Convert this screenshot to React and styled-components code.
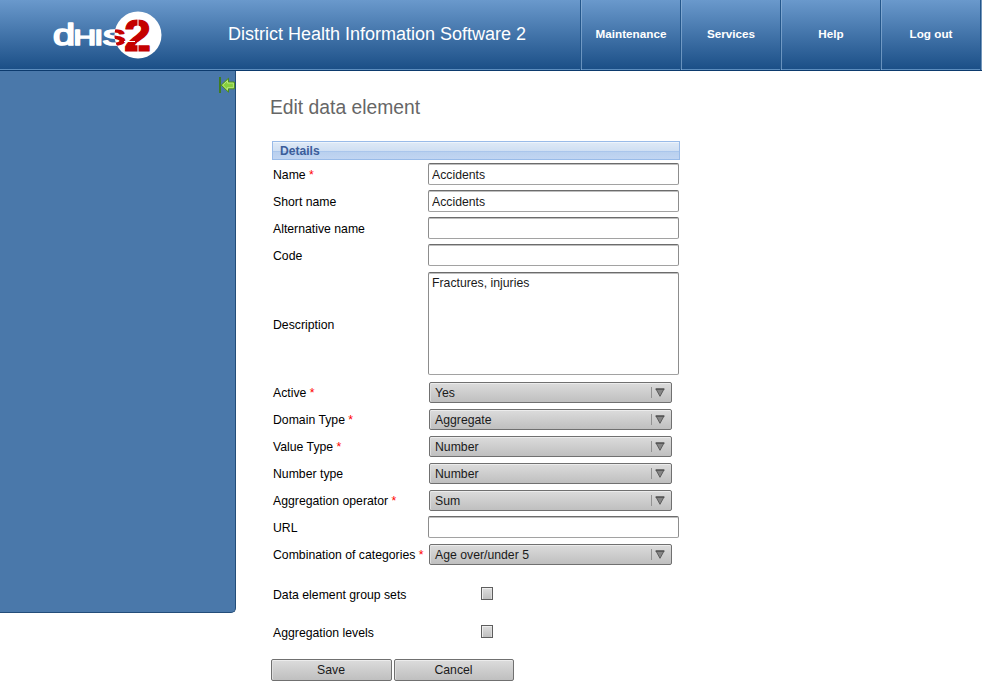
import React from "react";
import styled, { createGlobalStyle } from "styled-components";

const GlobalStyle = createGlobalStyle`
  * { box-sizing: border-box; }
  body {
    margin: 0;
    background: #fff;
    color: #000;
    font-family: "Liberation Sans", Arial, sans-serif;
    font-size: 12.25px;
    overflow: hidden;
  }
`;

const Header = styled.header`
  display: flex;
  height: 71px;
  background: linear-gradient(#6a99cc, #1b4f87 69px);
  border-bottom: 1px solid #0c3a6d;
  box-shadow: inset 0 -1px 0 #5c8dbe;
`;

const Logo = styled.svg`
  flex: none;
  width: 228px;
  height: 70px;
`;

const Brand = styled.div`
  flex: none;
  width: 352px;
  color: #fff;
  font-size: 18px;
  line-height: 69px;
  white-space: nowrap;
`;

const Nav = styled.nav`
  display: flex;
  width: 402px;
  border-right: 1px solid #7396bb;
`;

const NavItem = styled.a`
  flex: none;
  width: 100px;
  padding-left: 1px;
  border-left: 1px solid #23568b;
  box-shadow: inset 1px 0 0 rgba(150, 185, 220, 0.6);
  color: #fff;
  font-size: 11.7px;
  font-weight: bold;
  line-height: 68px;
  text-align: center;

  &:last-child { width: 101px; border-right: 1px solid #23568b; }
`;

const Body = styled.div`
  display: flex;
  align-items: flex-start;
`;

const Sidebar = styled.aside`
  flex: none;
  display: flex;
  justify-content: flex-end;
  width: 236px;
  height: 542px;
  padding-top: 6px;
  background: #4a78aa;
  border: solid #234d79;
  border-width: 0 1px 1px 0;
  border-bottom-right-radius: 5px;
`;

const Main = styled.main`
  padding: 25px 0 0 35px;
`;

const Title = styled.h1`
  height: 45px;
  margin: 0 0 0 -1px;
  color: #666;
  font-size: 19.3px;
  font-weight: normal;
  line-height: 24px;
`;

const SectionHeading = styled.h2`
  width: 408px;
  height: 19px;
  margin: 0 0 1px 1px;
  padding-left: 7px;
  border: 1px solid #99bbe8;
  background: linear-gradient(#dfeaf6, #cfdff3 9px, #aac6ec 9px, #aac6ec 10px, #b9d0ee 10px, #c1d5f2);
  box-shadow: inset 0 1px 0 #edf4fc;
  color: #3c5d9a;
  font-size: 12.1px;
  font-weight: bold;
  line-height: 18px;
`;

const Row = styled.div`
  display: grid;
  grid-template-columns: 155px 251px;
  align-items: center;
  height: ${(p) => p.$height || 27}px;
  margin-left: 2px;
`;

const Label = styled.label`
  padding-top: ${(p) => (p.$low ? 2 : 0)}px;
  line-height: 16px;
  white-space: nowrap;
`;

const Required = styled.span`
  color: #f00;
`;

const TextInput = styled.input`
  width: 251px;
  height: 22px;
  margin-bottom: 1px;
  padding: 1px 3px 0;
  border: 1px solid #8d8d8d;
  border-top-color: #6c6c6c;
  border-bottom-color: #a2a2a2;
  border-radius: 2px;
  box-shadow: inset 0 1px 0 #bebebe;
  color: #1a1a1a;
  font: 12.25px "Liberation Sans", Arial, sans-serif;
  outline: none;
`;

const TextArea = styled.textarea`
  display: block;
  width: 251px;
  height: 103px;
  margin-bottom: 1px;
  padding: 3px 3px 0;
  border: 1px solid #8d8d8d;
  border-top-color: #6c6c6c;
  border-bottom-color: #a2a2a2;
  border-radius: 2px;
  box-shadow: inset 0 1px 0 #bebebe;
  color: #1a1a1a;
  font: 12.25px "Liberation Sans", Arial, sans-serif;
  resize: none;
  outline: none;
`;

const SelectButton = styled.button`
  display: flex;
  align-items: center;
  justify-content: space-between;
  width: 243px;
  height: 21px;
  margin-left: 1px;
  padding: 0 5px;
  border: 1px solid #707070;
  border-radius: 2px;
  background: linear-gradient(#dcdcdc, #bfbfbf);
  box-shadow: inset 0 1px 0 #ececec, inset 1px 0 0 #dedede;
  color: #1a1a1a;
  font: 12.25px "Liberation Sans", Arial, sans-serif;
`;

const Checkbox = styled.input`
  appearance: none;
  width: 12px;
  height: 13px;
  margin: 0 0 1px 53px;
  border: 1px solid #5e5e5e;
  background: linear-gradient(#dedede, #bfbfbf);
  box-shadow: inset 1px 1px 0 #eee, inset -1px 0 0 #ddd;
`;

const Actions = styled.div`
  display: flex;
  gap: 2px;
  padding-top: 8px;
`;

const Button = styled.button`
  width: ${(p) => p.$width}px;
  height: 22px;
  padding: 0 1px 0 0;
  border: 1px solid #707070;
  border-radius: 2px;
  background: linear-gradient(#dcdcdc, #bfbfbf);
  box-shadow: inset 0 1px 0 #ececec, inset 1px 0 0 #dedede;
  color: #1a1a1a;
  font: 12.25px "Liberation Sans", Arial, sans-serif;
`;

const Spacer = styled.div`
  height: 7px;
`;

function Dhis2Logo() {
  const word = {
    y: 44.5,
    fontFamily: "Liberation Sans, Arial, sans-serif",
    fontSize: 22,
    fill: "#fff",
    stroke: "#fff",
    strokeWidth: 1.7,
    strokeLinejoin: "round",
    lengthAdjust: "spacingAndGlyphs",
  };
  const red = { fill: "#c40000", stroke: "#c40000" };
  return (
    <Logo viewBox="0 0 228 70" role="img" aria-label="DHIS 2">
      <defs>
        <clipPath id="inside"><circle cx="138" cy="35" r="23.5" /></clipPath>
      </defs>
      <circle cx="138" cy="35" r="23.5" fill="#fff" />
      <text {...word} x="53" fontSize="30" textLength="22">d</text>
      <text {...word} x="73.5" textLength="22.5">H</text>
      <text {...word} x="94.5" textLength="8.5">I</text>
      <text {...word} x="102.5" textLength="23">S</text>
      <g clipPath="url(#inside)">
        <text {...word} {...red} x="102.5" textLength="23">S</text>
      </g>
      <text {...word} {...red} x="124" y="50.5" fontSize="44.5" fontWeight="bold" strokeWidth="1.2" textLength="27">2</text>
      <path d="M138 18V30M138 42V52M124 41.5H135" stroke="#fff" strokeWidth="1" />
    </Logo>
  );
}

function CollapseIcon() {
  return (
    <svg width="16" height="17" viewBox="0 0 16 17">
      <path d="M0 0H2V16H0Z" fill="#3f7d22" />
      <path d="M2.2 8.2L9.5 1.2V5H15.4V11.8H9.5V15.2Z" fill="#86cf3d" stroke="#4c8a1e" />
      <path d="M3.7 8.1L8.5 3.6V6.1H14.4V10.7H8.5V12.9Z" fill="none" stroke="#c4ec8c" strokeWidth=".8" />
    </svg>
  );
}

function Arrow() {
  return (
    <svg width="15" height="13" viewBox="0 0 15 13">
      <path d="M.5 1V12" stroke="#929292" />
      <path d="M5 3H13L9 10.3Z" fill="#858585" stroke="#555" strokeWidth=".9" />
      <path d="M4.5 3H13.5" stroke="#444" />
    </svg>
  );
}

const fields = [
  { label: "Name", required: true, value: "Accidents" },
  { label: "Short name", value: "Accidents" },
  { label: "Alternative name", value: "" },
  { label: "Code", value: "" },
  { label: "Description", type: "area", value: "Fractures, injuries" },
  { label: "Active", required: true, type: "select", value: "Yes" },
  { label: "Domain Type", required: true, type: "select", value: "Aggregate" },
  { label: "Value Type", required: true, type: "select", value: "Number" },
  { label: "Number type", type: "select", value: "Number" },
  { label: "Aggregation operator", required: true, type: "select", value: "Sum" },
  { label: "URL", value: "" },
  { label: "Combination of categories", required: true, type: "select", value: "Age over/under 5" },
];

function Control({ type, value }) {
  if (type === "area") return <TextArea defaultValue={value} />;
  if (type === "select") return <SelectButton type="button">{value}<Arrow /></SelectButton>;
  return <TextInput defaultValue={value} />;
}

export default function App() {
  return (
    <>
      <GlobalStyle />
      <Header>
        <Dhis2Logo />
        <Brand>District Health Information Software 2</Brand>
        <Nav>
          <NavItem>Maintenance</NavItem>
          <NavItem>Services</NavItem>
          <NavItem>Help</NavItem>
          <NavItem>Log out</NavItem>
        </Nav>
      </Header>
      <Body>
        <Sidebar><CollapseIcon /></Sidebar>
        <Main>
          <Title>Edit data element</Title>
          <SectionHeading>Details</SectionHeading>
          {fields.map((f) => (
            <Row key={f.label} $height={f.type === "area" ? 110 : 27}>
              <Label $low={f.type === "area"}>{f.label}{f.required && <Required> *</Required>}</Label>
              <Control {...f} />
            </Row>
          ))}
          <Spacer />
          <Row $height={38}><Label $low>Data element group sets</Label><Checkbox type="checkbox" /></Row>
          <Row $height={38}><Label $low>Aggregation levels</Label><Checkbox type="checkbox" /></Row>
          <Actions>
            <Button $width={121}>Save</Button>
            <Button $width={120}>Cancel</Button>
          </Actions>
        </Main>
      </Body>
    </>
  );
}
